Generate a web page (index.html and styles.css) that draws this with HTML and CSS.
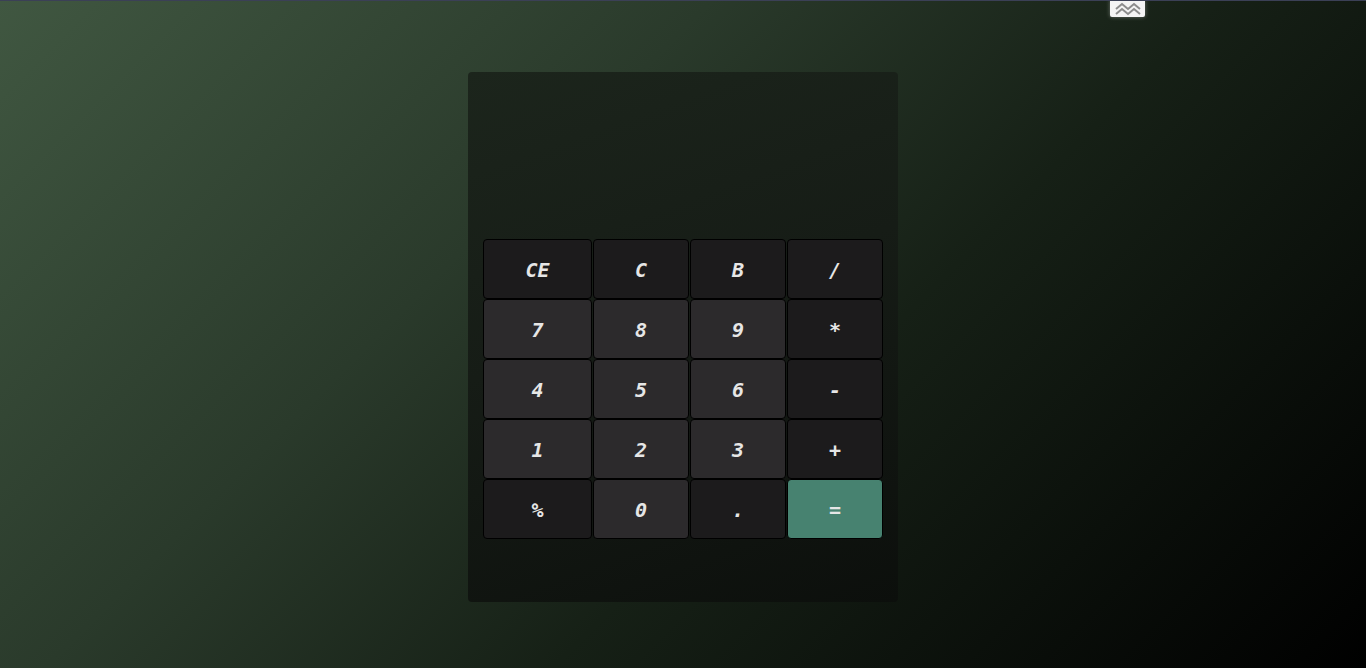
FILE: index.html
```html
<!DOCTYPE html>
<html>
<head>
<meta charset="utf-8">
<link rel="stylesheet" href="styles.css">
</head>
<body>
<div class="page">
  <div class="tab">
    <svg width="30" height="14" viewBox="0 0 30 14">
      <polyline points="3,7 9,2 15,7 21,2 27,7" fill="none" stroke="#8c8c8c" stroke-width="2"/>
      <polyline points="3,12 9,7 15,12 21,7 27,12" fill="none" stroke="#8c8c8c" stroke-width="2"/>
    </svg>
  </div>
  <div class="calc">
    <div class="display"></div>
    <div class="keys">
      <button class="key op">CE</button>
      <button class="key op">C</button>
      <button class="key op">B</button>
      <button class="key op">/</button>
      <button class="key num">7</button>
      <button class="key num">8</button>
      <button class="key num">9</button>
      <button class="key op">*</button>
      <button class="key num">4</button>
      <button class="key num">5</button>
      <button class="key num">6</button>
      <button class="key op">-</button>
      <button class="key num">1</button>
      <button class="key num">2</button>
      <button class="key num">3</button>
      <button class="key op">+</button>
      <button class="key op pct">%</button>
      <button class="key num">0</button>
      <button class="key op">.</button>
      <button class="key eq">=</button>
    </div>
  </div>
</div>
</body>
</html>
```
FILE: styles.css
```css
html, body {
  margin: 0;
  padding: 0;
  height: 100%;
}
body {
  background: linear-gradient(135deg, #405741 0%, #2a3a2b 35%, #162016 60%, #000 100%);
  border-top: 1px solid #3b4056;
  box-sizing: border-box;
  font-family: "DejaVu Sans Mono", "Liberation Mono", monospace;
  overflow: hidden;
}
.page {
  position: relative;
  height: 100%;
  display: flex;
  justify-content: center;
  padding-top: 71px;
  box-sizing: border-box;
}
.tab {
  position: absolute;
  top: -1px;
  left: 1110px;
  width: 35px;
  height: 17px;
  background: #f4f4f4;
  border-radius: 0 0 2px 2px;
  box-shadow: 0 0 4px rgba(255,255,255,0.35);
  display: flex;
  align-items: center;
  justify-content: center;
}
.calc {
  width: 430px;
  height: 530px;
  background: linear-gradient(160deg, #1c251c 0%, #161c16 45%, #0c0f0c 100%);
  border-radius: 4px;
  padding: 0 15px 0 15px;
  box-sizing: border-box;
}
.display {
  height: 167px;
}
.keys {
  display: grid;
  grid-template-columns: 109px 96px 96px 96px;
  grid-auto-rows: 60px;
  column-gap: 1px;
  row-gap: 0;
}
.key {
  border: 1px solid #000;
  border-radius: 4px;
  font-family: "DejaVu Sans Mono", monospace;
  font-weight: bold;
  font-style: italic;
  font-size: 20px;
  color: #e6e6e6;
  padding: 2px 0 0 0;
  margin: 0;
}
.op { background: #1c1b1c; }
.num { background: #2c2a2c; }
.eq { background: #478270; }
```
